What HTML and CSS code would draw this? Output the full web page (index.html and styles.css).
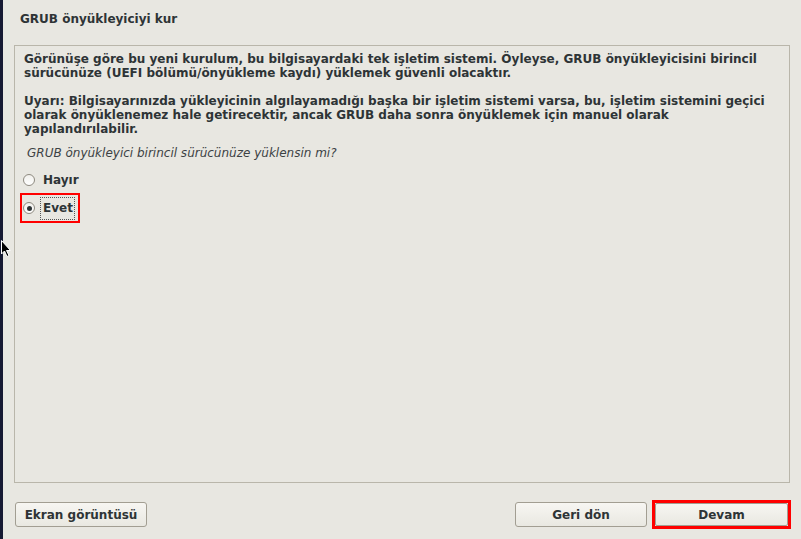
FILE: index.html
```html
<!DOCTYPE html>
<html lang="tr">
<head>
<meta charset="utf-8">
<title>GRUB önyükleyiciyi kur</title>
<link rel="stylesheet" href="styles.css">
</head>
<body>
<div class="screen">
  <div class="strip"></div>
  <div class="window">
    <h1 class="title">GRUB önyükleyiciyi kur</h1>
    <div class="panel">
      <p class="para">Görünüşe göre bu yeni kurulum, bu bilgisayardaki tek işletim sistemi. Öyleyse, GRUB önyükleyicisini birincil sürücünüze (UEFI bölümü/önyükleme kaydı) yüklemek güvenli olacaktır.</p>
      <p class="para">Uyarı: Bilgisayarınızda yükleyicinin algılayamadığı başka bir işletim sistemi varsa, bu, işletim sistemini geçici olarak önyüklenemez hale getirecektir, ancak GRUB daha sonra önyüklemek için manuel olarak yapılandırılabilir.</p>
      <p class="question">GRUB önyükleyici birincil sürücünüze yüklensin mi?</p>
      <div class="options">
        <label class="option"><span class="radio"></span><span class="label">Hayır</span></label>
        <label class="option marked"><span class="radio checked"></span><span class="label focus">Evet</span></label>
      </div>
    </div>
    <div class="actions">
      <button class="btn first">Ekran görüntüsü</button>
      <div class="spacer"></div>
      <button class="btn">Geri dön</button>
      <div class="mark-box"><button class="btn inner">Devam</button></div>
    </div>
  </div>
  <svg class="cursor" width="12" height="18" viewBox="0 0 12 18"><path d="M0.5 0.5 L0.5 14 L3.5 11 L6 16.5 L8 15.5 L5.5 10.5 L9.5 10.5 Z" fill="#000" stroke="#fff" stroke-width="1"/></svg>
</div>
</body>
</html>
```
FILE: styles.css
```css
html, body {
  margin: 0;
  padding: 0;
}
body {
  background: #e8e7e1;
  font-family: "DejaVu Sans", "Liberation Sans", sans-serif;
  color: #2e3436;
  font-size: 12px;
  line-height: 14px;
}
.screen {
  position: relative;
  display: flex;
  width: 801px;
  height: 539px;
  overflow: hidden;
}
.strip {
  width: 3px;
  background: #161a33;
  flex: none;
}
.window {
  flex: 1;
  display: flex;
  flex-direction: column;
  padding: 0 11px 12px 11px;
  background: #e8e7e1;
}
.title {
  margin: 0;
  font-size: 12px;
  font-weight: bold;
  line-height: 14px;
  padding: 12px 0 0 6px;
  height: 33px;
}
.panel {
  flex: 1;
  border: 1px solid #b9b6aa;
  padding: 6px 9px 0 9px;
}
.para {
  margin: 0 0 14px 0;
  font-weight: bold;
}
.para + .question {
  margin-top: -4px;
}
.question {
  margin: 0 0 0 3px;
  font-style: italic;
  color: #3c4244;
}
.options {
  display: flex;
  flex-direction: column;
  align-items: flex-start;
  gap: 2px;
  margin-top: 7px;
  margin-left: -2px;
}
.option {
  display: flex;
  align-items: center;
  gap: 6px;
  height: 26px;
  padding: 0 4px 0 1px;
  box-sizing: border-box;
  font-weight: bold;
}
.radio {
  width: 12px;
  height: 12px;
  border-radius: 50%;
  border: 1px solid #8e8a80;
  background: linear-gradient(#f1f0ec, #ffffff);
  box-sizing: border-box;
  position: relative;
}
.radio.checked::after {
  content: "";
  position: absolute;
  left: 2.5px;
  top: 2.5px;
  width: 5px;
  height: 5px;
  border-radius: 50%;
  background: #2e3436;
}
.label {
  padding: 3px 1px 4px 2px;
}
.label.focus {
  outline: 1px dotted #555;
  outline-offset: 0;
}
.marked {
  outline: 2px solid #ff0000;
  outline-offset: 0;
}
.actions {
  display: flex;
  align-items: center;
  margin-top: 19px;
  height: 25px;
}
.spacer {
  flex: 1;
}
.btn {
  width: 132px;
  height: 25px;
  border: 1px solid #a29e92;
  border-radius: 3px;
  background: linear-gradient(#f7f6f2, #e9e8e1);
  font-family: "DejaVu Sans", "Liberation Sans", sans-serif;
  font-size: 12px;
  font-weight: bold;
  color: #2e3436;
  padding: 0;
  margin: 0;
}
.btn.first {
  margin-left: 1px;
}
.mark-box {
  border: 3px solid #ff0000;
  margin-left: 5px;
  margin-right: -1px;
  display: flex;
}
.btn.inner {
  width: 133px;
  height: 23px;
  border-radius: 2px;
}
.cursor {
  position: absolute;
  left: 1px;
  top: 240px;
}
```
